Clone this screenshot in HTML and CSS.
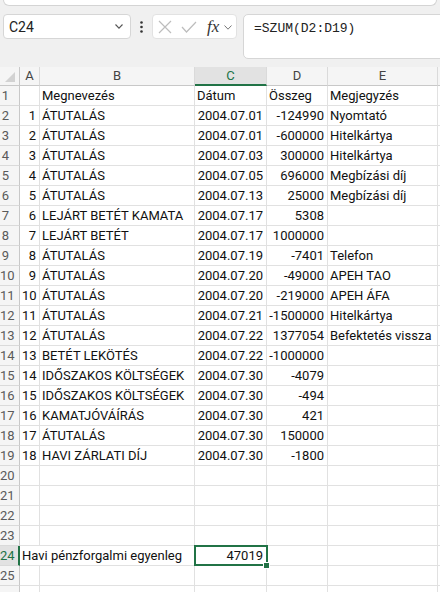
FILE: index.html
```html
<!DOCTYPE html>
<html lang="hu">
<head>
<meta charset="utf-8">
<title>Munkalap</title>
<link rel="stylesheet" href="styles.css">
</head>
<body>
<div class="top">
  <div class="search"></div>
  <div class="fbar">
    <div class="namebox">
      <span class="nbtext">C24</span>
      <svg class="chev" width="8" height="5" viewBox="0 0 8 5"><path d="M0.5 0.5 L4 4.2 L7.5 0.5" fill="none" stroke="#555" stroke-width="1.1"/></svg>
    </div>
    <div class="dots">
      <svg width="3" height="12" viewBox="0 0 3 12"><circle cx="1.5" cy="1.5" r="1.3" fill="#333"/><circle cx="1.5" cy="6" r="1.3" fill="#333"/><circle cx="1.5" cy="10.5" r="1.3" fill="#333"/></svg>
    </div>
    <div class="fbtns">
      <svg class="ix" width="14" height="14" viewBox="0 0 14 14"><path d="M1 1 L13 13 M13 1 L1 13" stroke="#bdbdbd" stroke-width="1.2" fill="none"/></svg>
      <svg class="ic" width="16" height="12" viewBox="0 0 16 12"><path d="M1 6 L5.5 11 L15 1" stroke="#bdbdbd" stroke-width="1.2" fill="none"/></svg>
      <span class="fx">fx</span>
      <svg class="chev2" width="8" height="5" viewBox="0 0 8 5"><path d="M0.5 0.5 L4 4.2 L7.5 0.5" fill="none" stroke="#777" stroke-width="1"/></svg>
    </div>
    <div class="finput">=SZUM(D2:D19)</div>
  </div>
</div>

<div class="sheet">
  <div class="corner"><svg width="20" height="19" viewBox="0 0 20 19"><polygon points="5,15 15,5 15,15" fill="#d2d2d2"/></svg></div>
  <div class="hd">A</div><div class="hd">B</div><div class="hd hsel">C</div><div class="hd">D</div><div class="hd">E</div><div class="hd"></div>

  <div class="rh">1</div><div class="c"></div><div class="c">Megnevezés</div><div class="c">Dátum</div><div class="c">Összeg</div><div class="c">Megjegyzés</div><div class="c"></div>
  <div class="rh">2</div><div class="c r">1</div><div class="c">ÁTUTALÁS</div><div class="c r">2004.07.01</div><div class="c r">-124990</div><div class="c">Nyomtató</div><div class="c"></div>
  <div class="rh">3</div><div class="c r">2</div><div class="c">ÁTUTALÁS</div><div class="c r">2004.07.01</div><div class="c r">-600000</div><div class="c">Hitelkártya</div><div class="c"></div>
  <div class="rh">4</div><div class="c r">3</div><div class="c">ÁTUTALÁS</div><div class="c r">2004.07.03</div><div class="c r">300000</div><div class="c">Hitelkártya</div><div class="c"></div>
  <div class="rh">5</div><div class="c r">4</div><div class="c">ÁTUTALÁS</div><div class="c r">2004.07.05</div><div class="c r">696000</div><div class="c">Megbízási díj</div><div class="c"></div>
  <div class="rh">6</div><div class="c r">5</div><div class="c">ÁTUTALÁS</div><div class="c r">2004.07.13</div><div class="c r">25000</div><div class="c">Megbízási díj</div><div class="c"></div>
  <div class="rh">7</div><div class="c r">6</div><div class="c">LEJÁRT BETÉT KAMATA</div><div class="c r">2004.07.17</div><div class="c r">5308</div><div class="c"></div><div class="c"></div>
  <div class="rh">8</div><div class="c r">7</div><div class="c">LEJÁRT BETÉT</div><div class="c r">2004.07.17</div><div class="c r">1000000</div><div class="c"></div><div class="c"></div>
  <div class="rh">9</div><div class="c r">8</div><div class="c">ÁTUTALÁS</div><div class="c r">2004.07.19</div><div class="c r">-7401</div><div class="c">Telefon</div><div class="c"></div>
  <div class="rh">10</div><div class="c r">9</div><div class="c">ÁTUTALÁS</div><div class="c r">2004.07.20</div><div class="c r">-49000</div><div class="c">APEH TAO</div><div class="c"></div>
  <div class="rh">11</div><div class="c r">10</div><div class="c">ÁTUTALÁS</div><div class="c r">2004.07.20</div><div class="c r">-219000</div><div class="c">APEH ÁFA</div><div class="c"></div>
  <div class="rh">12</div><div class="c r">11</div><div class="c">ÁTUTALÁS</div><div class="c r">2004.07.21</div><div class="c r">-1500000</div><div class="c">Hitelkártya</div><div class="c"></div>
  <div class="rh">13</div><div class="c r">12</div><div class="c">ÁTUTALÁS</div><div class="c r">2004.07.22</div><div class="c r">1377054</div><div class="c">Befektetés vissza</div><div class="c"></div>
  <div class="rh">14</div><div class="c r">13</div><div class="c">BETÉT LEKÖTÉS</div><div class="c r">2004.07.22</div><div class="c r">-1000000</div><div class="c"></div><div class="c"></div>
  <div class="rh">15</div><div class="c r">14</div><div class="c">IDŐSZAKOS KÖLTSÉGEK</div><div class="c r">2004.07.30</div><div class="c r">-4079</div><div class="c"></div><div class="c"></div>
  <div class="rh">16</div><div class="c r">15</div><div class="c">IDŐSZAKOS KÖLTSÉGEK</div><div class="c r">2004.07.30</div><div class="c r">-494</div><div class="c"></div><div class="c"></div>
  <div class="rh">17</div><div class="c r">16</div><div class="c">KAMATJÓVÁÍRÁS</div><div class="c r">2004.07.30</div><div class="c r">421</div><div class="c"></div><div class="c"></div>
  <div class="rh">18</div><div class="c r">17</div><div class="c">ÁTUTALÁS</div><div class="c r">2004.07.30</div><div class="c r">150000</div><div class="c"></div><div class="c"></div>
  <div class="rh">19</div><div class="c r">18</div><div class="c">HAVI ZÁRLATI DÍJ</div><div class="c r">2004.07.30</div><div class="c r">-1800</div><div class="c"></div><div class="c"></div>
  <div class="rh">20</div><div class="c"></div><div class="c"></div><div class="c"></div><div class="c"></div><div class="c"></div><div class="c"></div>
  <div class="rh">21</div><div class="c"></div><div class="c"></div><div class="c"></div><div class="c"></div><div class="c"></div><div class="c"></div>
  <div class="rh">22</div><div class="c"></div><div class="c"></div><div class="c"></div><div class="c"></div><div class="c"></div><div class="c"></div>
  <div class="rh">23</div><div class="c"></div><div class="c"></div><div class="c"></div><div class="c"></div><div class="c"></div><div class="c"></div>
  <div class="rh rsel">24</div><div class="c span2">Havi pénzforgalmi egyenleg</div><div class="c r sel">47019</div><div class="c"></div><div class="c"></div><div class="c"></div>
  <div class="rh">25</div><div class="c"></div><div class="c"></div><div class="c"></div><div class="c"></div><div class="c"></div><div class="c"></div>
  <div class="rh"></div><div class="c"></div><div class="c"></div><div class="c"></div><div class="c"></div><div class="c"></div><div class="c"></div>
</div>
</body>
</html>
```

FILE: styles.css
```css
html, body {
  margin: 0;
  padding: 0;
}
body {
  width: 440px;
  height: 592px;
  overflow: hidden;
  background: #f0f0f0;
  font-family: Roboto, "Liberation Sans", sans-serif;
  color: #1a1a1a;
}

.top {
  height: 67px;
}
.search {
  margin: 0 3px;
  height: 5px;
  background: #fff;
  border: 1px solid #d4d4d4;
  border-top: none;
  border-radius: 0 0 7px 7px;
}
.fbar {
  display: flex;
  align-items: flex-start;
  margin-top: 8px;
  height: 45px;
}
.namebox {
  margin-left: 3px;
  width: 128px;
  height: 25px;
  box-sizing: border-box;
  background: #fff;
  border: 1px solid #d6d6d6;
  border-radius: 4px;
  display: flex;
  align-items: center;
  justify-content: space-between;
  padding: 0 7px 0 5px;
}
.nbtext {
  font-size: 14px;
  color: #222;
}
.dots {
  width: 21px;
  height: 25px;
  display: flex;
  align-items: center;
  justify-content: center;
}
.fbtns {
  width: 85px;
  height: 25px;
  box-sizing: border-box;
  background: #fff;
  border: 1px solid #e2e2e2;
  border-radius: 4px;
  display: flex;
  align-items: center;
  padding-left: 5px;
}
.ix { margin-right: 9px; }
.ic { margin-right: 10px; }
.fx {
  font-family: "Liberation Serif", serif;
  font-style: italic;
  font-size: 17px;
  color: #333;
  margin-right: 5px;
  line-height: 20px;
}
.chev2 { margin-top: 1px; }
.finput {
  margin-left: 6px;
  margin-right: -10px;
  flex: 1;
  height: 45px;
  box-sizing: border-box;
  background: #fff;
  border: 1px solid #d6d6d6;
  border-radius: 5px;
  padding: 6px 0 0 10px;
  font-family: "Liberation Mono", monospace;
  font-size: 13px;
  line-height: 16px;
  color: #222;
}

.sheet {
  display: grid;
  grid-template-columns: 20px 20px 155px 72px 61px 110px 1fr;
  grid-template-rows: 19px;
  grid-auto-rows: 20px;
  background: #fff;
}
.corner {
  background: #f5f5f5;
  border-right: 1px solid #c8c8c8;
  border-bottom: 1px solid #c8c8c8;
  box-sizing: border-box;
}
.corner svg { display: block; }
.hd {
  background: #f5f5f5;
  border-right: 1px solid #dadada;
  border-bottom: 1px solid #c8c8c8;
  box-sizing: border-box;
  text-align: center;
  font-size: 13px;
  line-height: 18px;
  color: #444;
  overflow: hidden;
}
.hsel {
  background: #e2e2e2;
  color: #217346;
  border-bottom: 2px solid #217346;
}
.rh {
  background: #f5f5f5;
  border-right: 1px solid #c8c8c8;
  border-bottom: 1px solid #dadada;
  box-sizing: border-box;
  text-align: center;
  padding-right: 8px;
  font-size: 13px;
  line-height: 19px;
  color: #5a5a5a;
  overflow: hidden;
  white-space: nowrap;
}
.rsel {
  background: #e2e2e2;
  color: #217346;
  border-right: 2px solid #217346;
}
.c {
  border-right: 1px solid #e1e1e1;
  border-bottom: 1px solid #e1e1e1;
  box-sizing: border-box;
  padding: 0 2px;
  font-size: 13px;
  line-height: 19px;
  white-space: nowrap;
  overflow: hidden;
  color: #111;
}
.r {
  text-align: right;
  padding-right: 3px;
}
.span2 {
  grid-column: span 2;
}
.sel {
  position: relative;
  overflow: visible;
}
.sel::after {
  content: "";
  position: absolute;
  left: -1px;
  top: -1px;
  right: -2px;
  bottom: -1px;
  border: 2px solid #217346;
}
.sel::before {
  content: "";
  position: absolute;
  right: -4px;
  bottom: -4px;
  width: 5px;
  height: 5px;
  background: #217346;
  border: 1px solid #fff;
  z-index: 2;
}
```
